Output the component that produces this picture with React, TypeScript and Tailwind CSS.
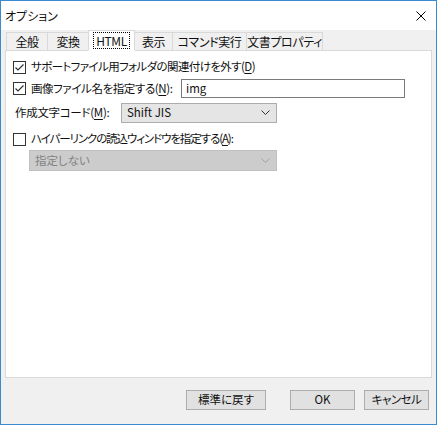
import React from 'react';

const font = "font-['Noto_Sans_CJK_JP','Noto_Sans',sans-serif] [font-feature-settings:'palt']";

const tabs = [
  { label: '全般', w: 'w-[42px]' },
  { label: '変換', w: 'w-[42px]' },
  { label: 'HTML', w: 'w-[47px]', active: true },
  { label: '表示', w: 'w-[39px]' },
  { label: 'コマンド実行', w: 'w-[75px]' },
  { label: '文書プロパティ', w: 'w-[77px]' },
];

const Check = ({ checked }: { checked: boolean }) => (
  <span className="w-[13px] h-[13px] border border-[#333333] bg-white flex items-center justify-center shrink-0">
    {checked && (
      <svg width="11" height="11" viewBox="0 0 11 11">
        <path d="M1.5 5.5 L4 8 L9.5 2.5" fill="none" stroke="#333333" strokeWidth="1.2" />
      </svg>
    )}
  </span>
);

const Chevron = ({ color }: { color: string }) => (
  <svg width="9" height="6" viewBox="0 0 9 6">
    <path d="M0.5 0.5 L4.5 4.5 L8.5 0.5" fill="none" stroke={color} strokeWidth="1" />
  </svg>
);

// mnemonic letter with underline
const M = ({ c }: { c: string }) => <span className="underline underline-offset-2">{c}</span>;

export default function App() {
  return (
    <div className={`w-[440px] h-[426px] bg-white text-[11.5px] leading-none text-[#111111] whitespace-nowrap ${font}`}>
      <div className="w-[437px] h-[425px] border border-[#3b8ad0] flex flex-col bg-[#f0f0f0]">
        {/* title bar */}
        <div className="h-[29px] bg-white flex items-center justify-between pl-[4px] pr-[10px] shrink-0">
          <span className="text-[12px]">オプション</span>
          <svg width="10" height="10" viewBox="0 0 10 10">
            <path d="M0.5 0.5 L9.5 9.5 M9.5 0.5 L0.5 9.5" stroke="#000" strokeWidth="1" />
          </svg>
        </div>

        {/* tabs */}
        <div className="flex items-end h-[20px] pl-[6px] shrink-0 relative z-10 text-[12px] tracking-[-0.4px]">
          {tabs.map((t) =>
            t.active ? (
              <div
                key={t.label}
                className={`${t.w} h-[21px] -ml-px -mb-px bg-white border border-[#d9d9d9] border-b-white flex items-center justify-center`}
              >
                <span className="border border-dotted border-black px-[2px] h-[17px] flex items-center">{t.label}</span>
              </div>
            ) : (
              <div
                key={t.label}
                className={`${t.w} h-[18px] -ml-px bg-[#f0f0f0] border border-b-0 border-[#d9d9d9] flex items-center justify-center`}
              >
                {t.label}
              </div>
            )
          )}
        </div>

        {/* panel */}
        <div className="mx-[4px] h-[328px] bg-white border border-[#d9d9d9] flex flex-col pl-[7px] pt-[7px] shrink-0">
          <div className="h-[18px] flex items-center gap-[5px]">
            <Check checked />
            <span className="tracking-[-0.6px]">サポートファイル用フォルダの関連付けを外す(<M c="D" />)</span>
          </div>

          <div className="h-[19px] mt-[3px] flex items-center">
            <div className="w-[168px] flex items-center gap-[5px]">
              <Check checked />
              <span className="tracking-[-0.4px]">画像ファイル名を指定する(<M c="N" />):</span>
            </div>
            <div className="w-[224px] h-[19px] border border-[#7a7a7a] bg-white flex items-center pl-[4px]">img</div>
          </div>

          <div className="h-[20px] mt-[5px] flex items-center">
            <span className="w-[108px] pl-[2px] tracking-[-0.3px]">作成文字コード(<M c="M" />):</span>
            <div className="w-[156px] h-[20px] border border-[#acacac] bg-[#e5e5e5] flex items-center justify-between pl-[5px] pr-[6px]">
              <span>Shift JIS</span>
              <Chevron color="#333333" />
            </div>
          </div>

          <div className="h-[18px] mt-[7px] flex items-center gap-[5px]">
            <Check checked={false} />
            <span className="tracking-[-1.1px]">ハイパーリンクの読込ウィンドウを指定する(<M c="A" />):</span>
          </div>

          <div className="h-[21px] mt-[2px] pl-[16px] flex items-center">
            <div className="w-[248px] h-[21px] border border-[#bfbfbf] bg-[#cccccc] flex items-center justify-between pl-[5px] pr-[6px] text-[#838383]">
              <span>指定しない</span>
              <Chevron color="#a0a0a0" />
            </div>
          </div>
        </div>

        {/* buttons */}
        <div className="mt-[12px] h-[20px] flex items-center shrink-0">
          <div className="ml-[185px] w-[80px] h-[20px] border border-[#adadad] bg-[#e1e1e1] flex items-center justify-center">標準に戻す</div>
          <div className="ml-[24px] w-[65px] h-[20px] border border-[#adadad] bg-[#e1e1e1] flex items-center justify-center">OK</div>
          <div className="ml-[9px] w-[65px] h-[20px] border border-[#adadad] bg-[#e1e1e1] flex items-center justify-center tracking-[-0.5px]">キャンセル</div>
        </div>
      </div>
    </div>
  );
}
